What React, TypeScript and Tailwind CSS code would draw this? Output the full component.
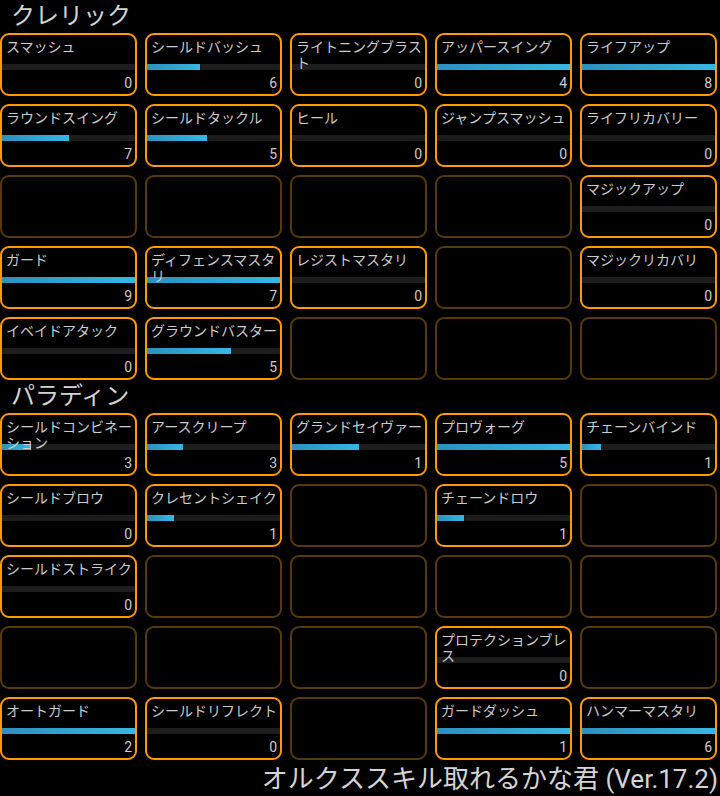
type Skill = { name: string; level: number; fill: number } | null;

const cleric: Skill[] = [
  { name: "スマッシュ", level: 0, fill: 0 },
  { name: "シールドバッシュ", level: 6, fill: 40 },
  { name: "ライトニングブラスト", level: 0, fill: 0 },
  { name: "アッパースイング", level: 4, fill: 100 },
  { name: "ライフアップ", level: 8, fill: 100 },

  { name: "ラウンドスイング", level: 7, fill: 50 },
  { name: "シールドタックル", level: 5, fill: 45 },
  { name: "ヒール", level: 0, fill: 0 },
  { name: "ジャンプスマッシュ", level: 0, fill: 0 },
  { name: "ライフリカバリー", level: 0, fill: 0 },

  null,
  null,
  null,
  null,
  { name: "マジックアップ", level: 0, fill: 0 },

  { name: "ガード", level: 9, fill: 100 },
  { name: "ディフェンスマスタリ", level: 7, fill: 100 },
  { name: "レジストマスタリ", level: 0, fill: 0 },
  null,
  { name: "マジックリカバリ", level: 0, fill: 0 },

  { name: "イベイドアタック", level: 0, fill: 0 },
  { name: "グラウンドバスター", level: 5, fill: 63 },
  null,
  null,
  null,
];

const paladin: Skill[] = [
  { name: "シールドコンビネーション", level: 3, fill: 22 },
  { name: "アースクリープ", level: 3, fill: 27 },
  { name: "グランドセイヴァー", level: 1, fill: 50 },
  { name: "プロヴォーグ", level: 5, fill: 100 },
  { name: "チェーンバインド", level: 1, fill: 14 },

  { name: "シールドブロウ", level: 0, fill: 0 },
  { name: "クレセントシェイク", level: 1, fill: 20 },
  null,
  { name: "チェーンドロウ", level: 1, fill: 20 },
  null,

  { name: "シールドストライク", level: 0, fill: 0 },
  null,
  null,
  null,
  null,

  null,
  null,
  null,
  { name: "プロテクションブレス", level: 0, fill: 0 },
  null,

  { name: "オートガード", level: 2, fill: 100 },
  { name: "シールドリフレクト", level: 0, fill: 0 },
  null,
  { name: "ガードダッシュ", level: 1, fill: 100 },
  { name: "ハンマーマスタリ", level: 6, fill: 100 },
];

function SkillCell({ skill }: { skill: Skill }) {
  if (!skill) {
    return <div className="h-[63px] rounded-[9px] border-2 border-[#583a0a]" />;
  }
  return (
    <div className="flex h-[63px] flex-col rounded-[9px] border-2 border-[#ff9a00] overflow-hidden">
      <div className="relative z-10 h-[29px] pl-[4px] pt-[4px] text-[14px] leading-[16px] text-[#cccccc]">
        {skill.name}
      </div>
      <div className="h-[6px] bg-[#1d1d1d]">
        <div
          className="h-full bg-gradient-to-r from-[#2a92bc] to-[#36b7e6] shadow-[0_2px_3px_rgba(0,0,0,0.8)]"
          style={{ width: `${skill.fill}%` }}
        />
      </div>
      <div className="mt-[5px] pr-[3px] text-right text-[14px] leading-[17px] text-[#cccccc]">
        {skill.level}
      </div>
    </div>
  );
}

function Section({ title, skills }: { title: string; skills: Skill[] }) {
  return (
    <section>
      <h2 className="h-[33px] pl-[11px] text-[24px] leading-[33px] text-[#d4d4d4]">{title}</h2>
      <div className="grid grid-cols-[repeat(5,137px)] gap-x-[8px] gap-y-[8px]">
        {skills.map((s, i) => (
          <SkillCell key={i} skill={s} />
        ))}
      </div>
    </section>
  );
}

export default function App() {
  return (
    <div className="min-h-screen w-[720px] bg-black font-[Roboto,'Noto_Sans_CJK_JP',sans-serif]">
      <Section title="クレリック" skills={cleric} />
      <Section title="パラディン" skills={paladin} />
      <p className="h-[36px] pr-[2px] text-right text-[26px] leading-[38px] text-[#d4d4d4]">
        オルクススキル取れるかな君 (Ver.17.2)
      </p>
    </div>
  );
}
